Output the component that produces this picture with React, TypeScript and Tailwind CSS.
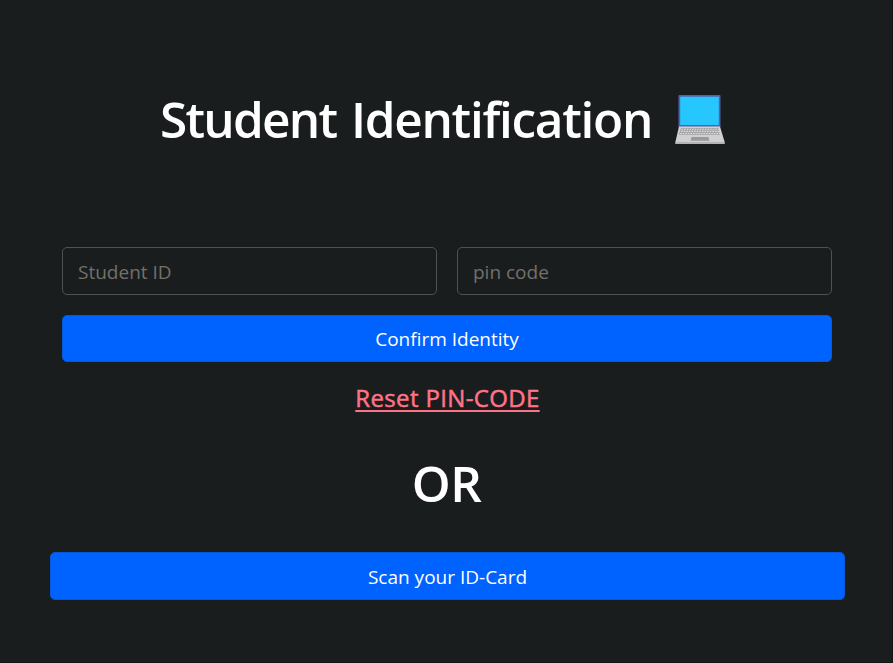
import type { ReactNode } from "react";

function LaptopIcon() {
  return (
    <svg width="50" height="50" viewBox="0 0 50 50" aria-hidden="true">
      <path d="M4.5 0h40a1 1 0 0 1 1 1v31H3.500V1a1 1 0 0 1 1-1z" fill="#5661a8" />
      <path d="M5.200 1.700h38.600V30h-38.600z" fill="#26c6ff" />
      <path d="M4 31.500h41l4.500 15v2.500H0.500v-2.500z" fill="#d0d0d2" />
      <path d="M0.500 47h49v2H0.500z" fill="#b3b3b7" />
      <path d="M6 33h37l2.200 6.700h-41.400z" fill="#a2a2a5" />
      <path
        d="M6.500 34.300H43M6 36.400H44M5 38.500H45"
        stroke="#dededf"
        strokeWidth="1.100"
        strokeDasharray="1.700 0.900"
      />
      <path d="M16.500 42h17l.8 3.700H15.500z" fill="#99999d" />
    </svg>
  );
}

function Field({ label, type }: { label: string; type: string }) {
  return (
    <input
      type={type}
      placeholder={label}
      className="h-12 min-w-0 flex-1 rounded-[5px] border border-[#51524f] bg-transparent px-[15px] pt-px text-[19px] text-white placeholder:text-[#73706a] placeholder:opacity-100"
    />
  );
}

function PrimaryButton({ children, className }: { children: ReactNode; className: string }) {
  return (
    <button
      className={`w-full rounded-[5px] border border-[#0759d8] bg-[#0062ff] text-[19px] text-white ${className}`}
    >
      {children}
    </button>
  );
}

export default function App() {
  return (
    <main className="h-[663px] w-[893px] overflow-hidden border-r border-b border-[#151315] bg-[#1a1d1e] pr-[47px] pl-[50px] font-['Open_Sans','Noto_Sans',sans-serif]">
      <h1 className="flex items-start pt-[94px] pl-[110px] text-[49.500px] leading-[50px] font-semibold text-white">
        <span className="w-[515px] whitespace-nowrap tracking-[-1.3px] [word-spacing:3px]">
          <span className="tracking-[-1.750px]">Student</span> Identification
        </span>
        <span className="pt-px">
          <LaptopIcon />
        </span>
      </h1>
      <form className="mr-[13px] ml-3 pt-[102px]" onSubmit={(e) => e.preventDefault()}>
        <div className="flex gap-5">
          <Field label="Student ID" type="text" />
          <Field label="pin code" type="password" />
        </div>
        <PrimaryButton className="mt-5 h-[47px] pt-px">Confirm Identity</PrimaryButton>
      </form>
      <div className="mt-[21px] flex h-[30px] justify-center">
        <a
          href="#"
          className="text-[24px] leading-[30px] tracking-[0.35px] whitespace-nowrap text-[#ff7386] underline decoration-2 underline-offset-[3px] [-webkit-text-stroke:0.5px_#ff7386]"
        >
          Reset PIN-CODE
        </a>
      </div>
      <h2 className="mt-[45px] pr-[2px] text-center text-[49.500px] leading-[50px] font-semibold tracking-[-0.5px] text-white">
        OR
      </h2>
      <PrimaryButton className="mt-11 h-12 pt-[2px]">Scan your ID-Card</PrimaryButton>
    </main>
  );
}
